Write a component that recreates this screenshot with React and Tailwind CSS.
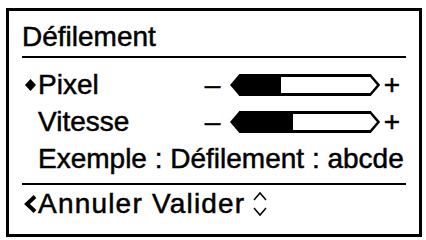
import React from 'react'

/**
 * Small monochrome LCD-style settings screen: scrolling speed
 */
function Diamond() {
  return (
    <svg width="11" height="12" viewBox="0 0 11 12" className="ml-[3px] block">
      <polygon points="5.5,0 11,6 5.5,12 0,6" fill="black" />
    </svg>
  )
}

function Slider({ fill }) {
  return (
    <svg width="150" height="22" viewBox="0 0 150 22" className="block">
      <path d={`M0 11 L9 0.5 L${fill} 0.5 L${fill} 21.5 L9 21.5 Z`} fill="black" />
      <path d="M9 1.5 H141 M9 20.5 H141" stroke="black" strokeWidth="3" fill="none" />
      <path d="M140 1 L148.5 11 L140 21" stroke="black" strokeWidth="2.5" fill="none" />
    </svg>
  )
}

function SettingRow({ label, fill, selected }) {
  return (
    <div className="flex h-[37px] items-center pr-[6px]">
      <span className="flex w-4 items-center">{selected && <Diamond />}</span>
      <span className="flex-1">{label}</span>
      <span className="w-4 text-center">–</span>
      <span className="ml-[9px]">
        <Slider fill={fill} />
      </span>
      <span className="ml-1">+</span>
    </div>
  )
}

export default function App() {
  return (
    <div className="h-[240px] w-[426px] overflow-hidden bg-white pl-[6px] pt-[8px] font-['Liberation_Sans',Arial,sans-serif] text-[28px] text-black [-webkit-text-stroke:0.5px_black]">
      <div className="flex h-[229px] w-[416px] flex-col border-[3px] border-black px-[13px] pt-[8px]">
        {/* Title */}
        <div className="h-[39px] border-b-2 border-black leading-[36px]">Défilement</div>

        {/* Settings */}
        <div className="pt-[8px] leading-[36px]">
          <SettingRow label="Pixel" fill={51} selected />
          <SettingRow label="Vitesse" fill={63} />
          <div className="flex h-[37px] items-center whitespace-nowrap pl-4">Exemple : Défilement : abcde</div>
        </div>

        {/* Footer */}
        <div className="mt-[6px] flex h-[38px] items-center border-t-2 border-black pt-[1px] leading-[36px]">
          <svg width="13" height="18" viewBox="0 0 13 18" className="ml-[2px] mr-[1px] block">
            <polyline points="11,1.5 3,9 11,16.5" stroke="black" strokeWidth="4" fill="none" />
          </svg>
          <span className="whitespace-nowrap tracking-[1.2px]">Annuler Valider</span>
          <svg width="14" height="26" viewBox="0 0 14 26" className="ml-[8px] block">
            <polyline points="1,9 7,2 13,9" stroke="black" strokeWidth="1.5" fill="none" />
            <polyline points="1,17 7,24 13,17" stroke="black" strokeWidth="1.5" fill="none" />
          </svg>
        </div>
      </div>
    </div>
  )
}
